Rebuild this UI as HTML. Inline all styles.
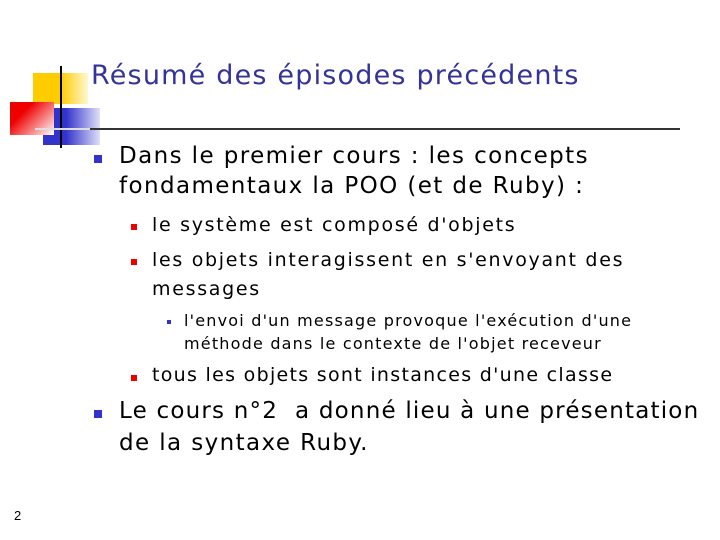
<!DOCTYPE html>
<html><head><meta charset="utf-8"><style>
body{margin:0;width:720px;height:540px;background:#fff;position:relative;overflow:hidden;font-family:"DejaVu Sans","Liberation Sans",sans-serif;}
.t{position:absolute;white-space:nowrap;line-height:1;color:#000;}
.b{position:absolute;}
.l1{font-size:23px;letter-spacing:1.4px}
.l2{font-size:19px;letter-spacing:1.7px}
.l3{font-size:16px;letter-spacing:1.2px}
</style></head><body>
<div class="b" style="left:33px;top:73px;width:55px;height:31px;background:linear-gradient(90deg,#ffcc00 50%,#fff8d0)"></div>
<div class="b" style="left:43px;top:108px;width:57px;height:37px;background:linear-gradient(90deg,#3333cc 40%,#e0e0f8)"></div>
<div class="b" style="left:10px;top:102px;width:44px;height:33px;background:linear-gradient(135deg,#ee0000 30%,#fff)"></div>
<div class="b" style="left:60px;top:66px;width:2px;height:82px;background:#000"></div>
<div class="b" style="left:35px;top:128px;width:60px;height:2px;background:#ddd"></div>
<div class="b" style="left:90px;top:128px;width:590px;height:2px;background:#333"></div>
<div class="t" style="left:91px;top:62px;font-size:27px;letter-spacing:1.2px;color:#333399">Résumé des épisodes précédents</div>
<div class="b" style="left:94px;top:155px;width:8px;height:8px;background:#3333cc"></div>
<div class="t l1" style="left:119px;top:145px">Dans le premier cours : les concepts</div>
<div class="t l1" style="left:119px;top:175px">fondamentaux la POO (et de Ruby) :</div>
<div class="b" style="left:131px;top:224px;width:6px;height:6px;background:#e00"></div>
<div class="t l2" style="left:152px;top:216px">le système est composé d'objets</div>
<div class="b" style="left:131px;top:259px;width:6px;height:6px;background:#e00"></div>
<div class="t l2" style="left:152px;top:251px">les objets interagissent en s'envoyant des</div>
<div class="t l2" style="left:152px;top:280px">messages</div>
<div class="b" style="left:167px;top:320px;width:4px;height:4px;background:#3333cc"></div>
<div class="t l3" style="left:184px;top:313px">l'envoi d'un message provoque l'exécution d'une</div>
<div class="t l3" style="left:184px;top:336px">méthode dans le contexte de l'objet receveur</div>
<div class="b" style="left:131px;top:375px;width:6px;height:6px;background:#e00"></div>
<div class="t l2" style="left:152px;top:366px;letter-spacing:1.3px">tous les objets sont instances d'une classe</div>
<div class="b" style="left:94px;top:410px;width:8px;height:8px;background:#3333cc"></div>
<div class="t l1" style="left:119px;top:400px;letter-spacing:1.2px">Le cours n°2&nbsp; a donné lieu à une présentation</div>
<div class="t l1" style="left:119px;top:432px">de la syntaxe Ruby.</div>
<div class="t" style="left:14px;top:509px;font-size:13px;font-family:'Liberation Sans',sans-serif">2</div>
</body></html>
